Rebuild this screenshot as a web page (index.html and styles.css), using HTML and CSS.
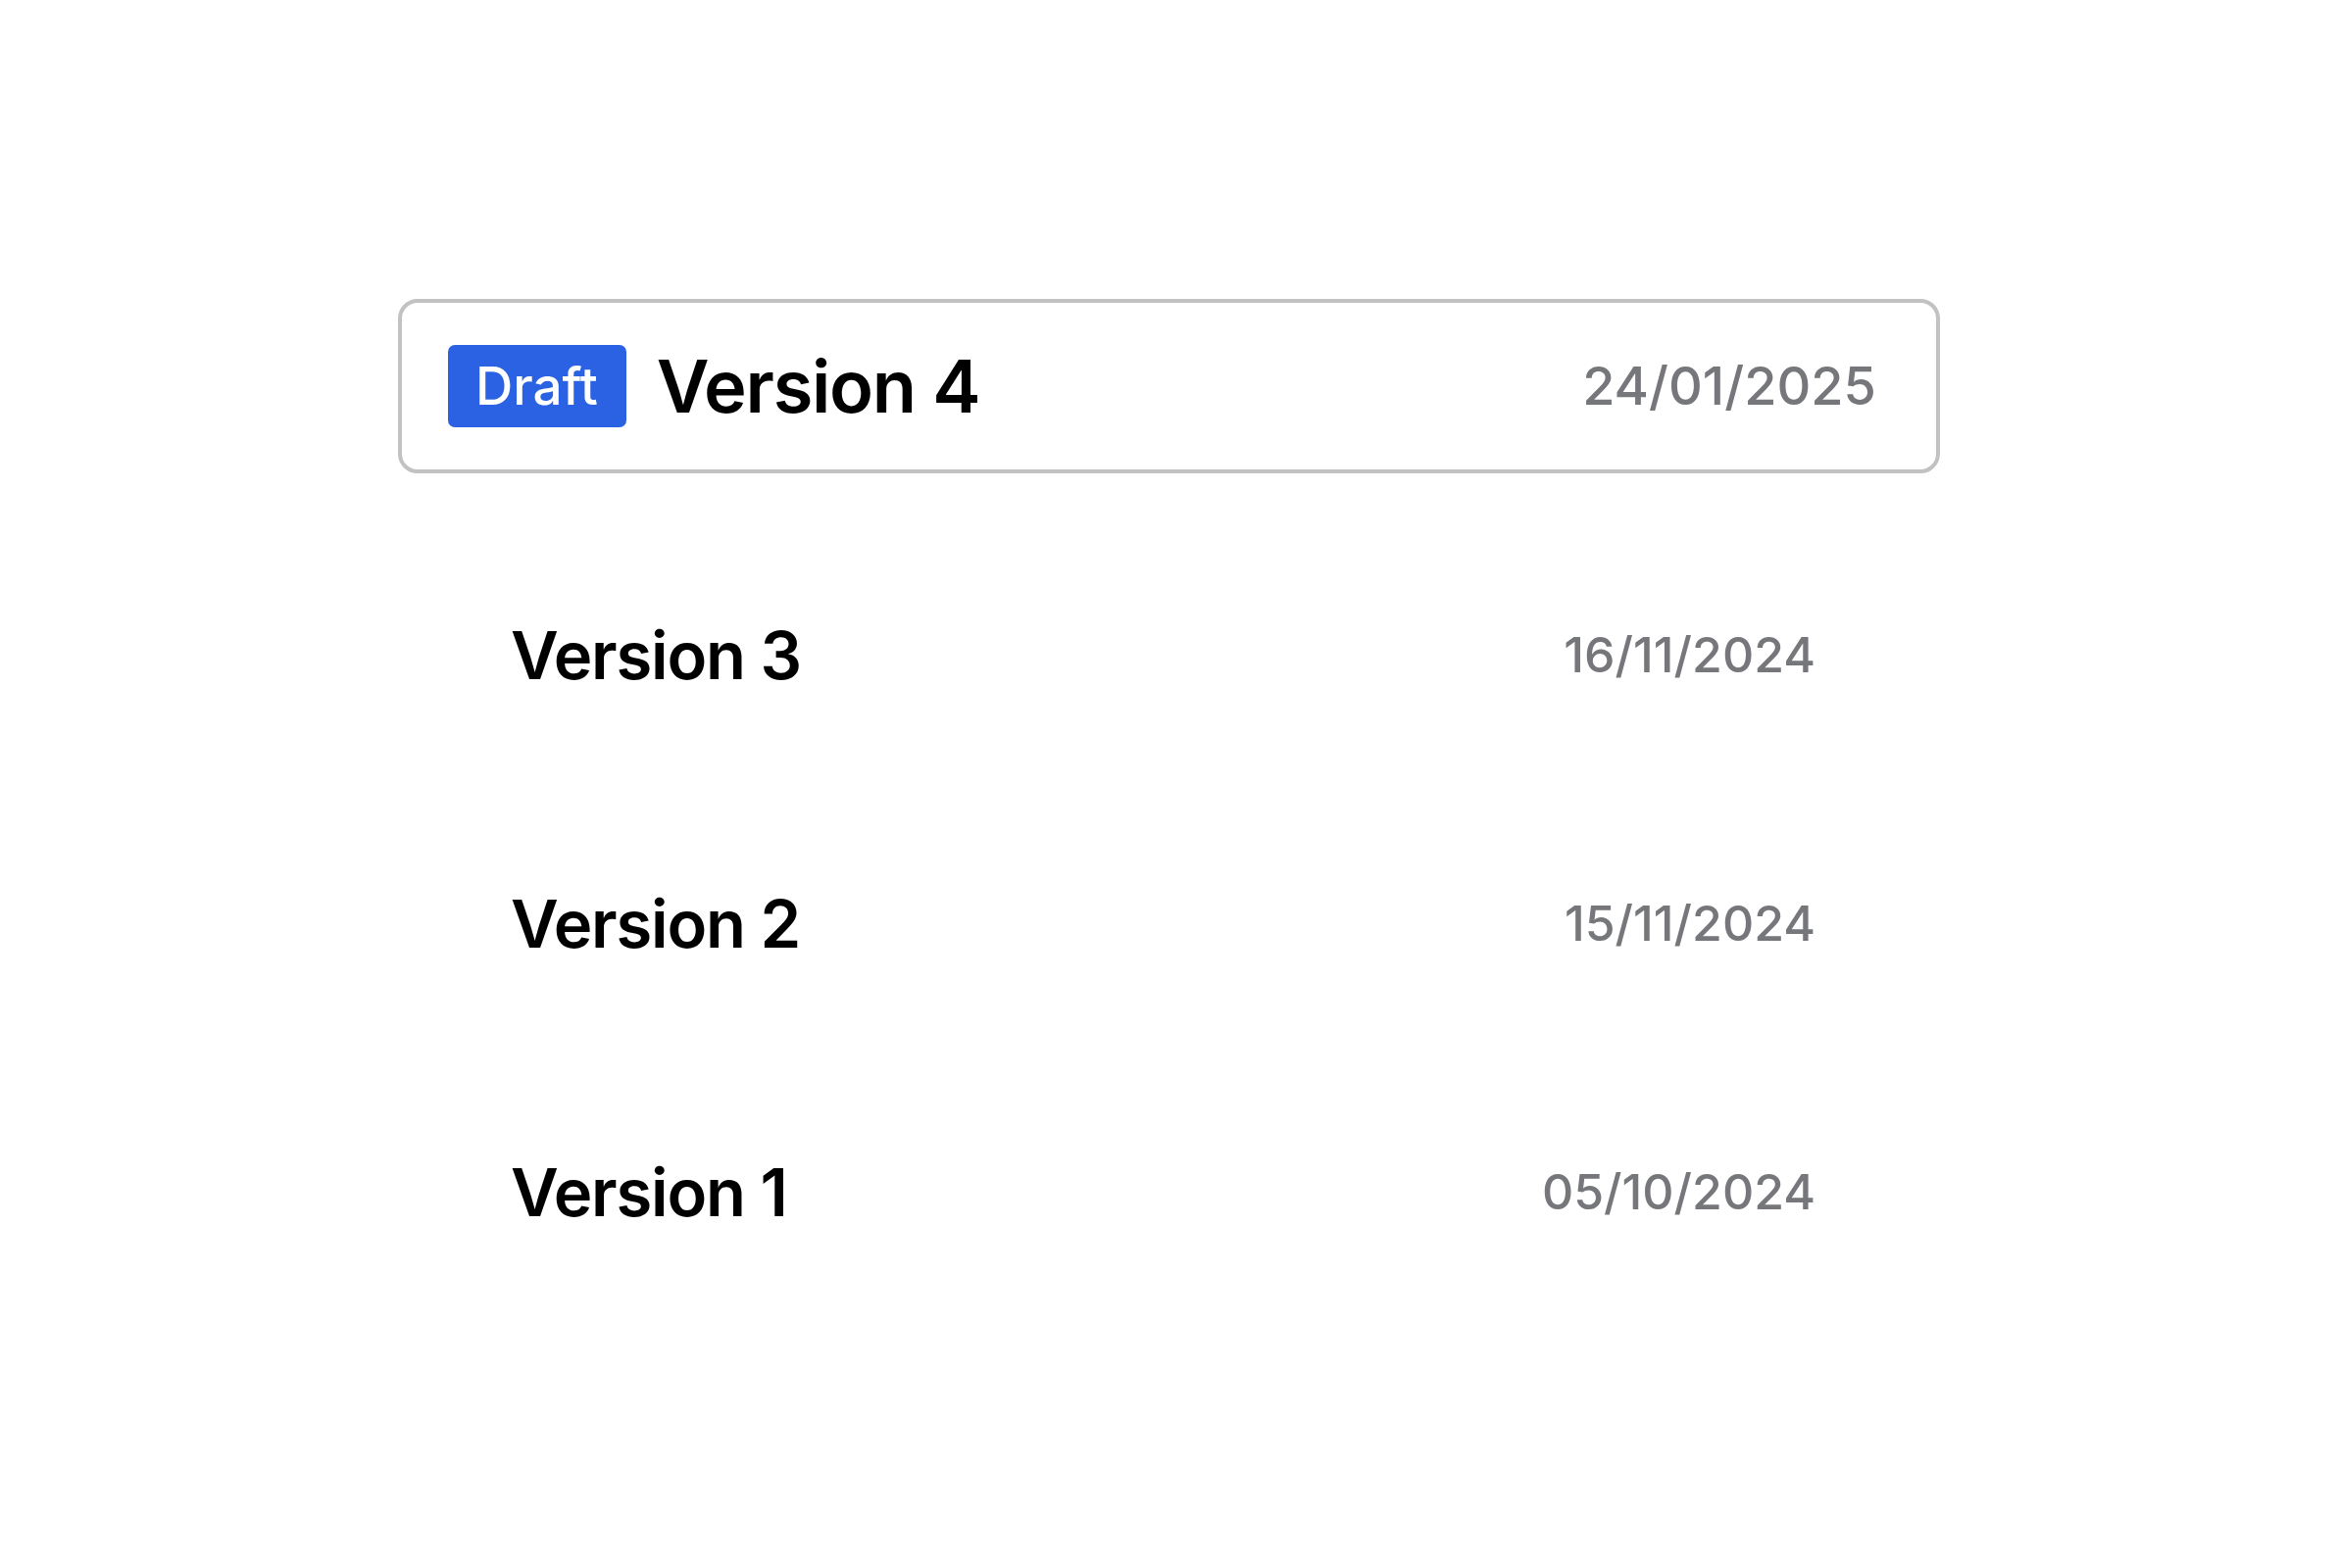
FILE: index.html
```html
<!DOCTYPE html>
<html lang="en">
<head>
<meta charset="utf-8">
<title>Versions</title>
<link rel="stylesheet" href="styles.css">
</head>
<body>
<main class="page">
  <ul class="versions">
    <li class="version version--current">
      <span class="badge">Draft</span>
      <span class="version__name">Version 4</span>
      <span class="version__date">24/01/2025</span>
    </li>
    <li class="version">
      <span class="version__name">Version 3</span>
      <span class="version__date">16/11/2024</span>
    </li>
    <li class="version">
      <span class="version__name">Version 2</span>
      <span class="version__date">15/11/2024</span>
    </li>
    <li class="version">
      <span class="version__name">Version 1</span>
      <span class="version__date">05/10/2024</span>
    </li>
  </ul>
</main>
</body>
</html>
```
FILE: styles.css
```css
html, body {
  margin: 0;
  padding: 0;
  background: #ffffff;
}
body {
  font-family: Inter, "Noto Sans", sans-serif;
  color: #000000;
}
.page {
  padding: 305px 0 0 406px;
}
.versions {
  list-style: none;
  margin: 0;
  padding: 0;
  width: 1573px;
  display: flex;
  flex-direction: column;
  gap: 96px;
}
.version {
  box-sizing: border-box;
  height: 178px;
  display: flex;
  align-items: center;
  padding: 0 127px 0 115px;
}
.version__name {
  font-size: 67px;
  font-weight: 600;
  letter-spacing: -1.2px;
  line-height: 1;
}
.version__date {
  margin-left: auto;
  font-size: 50px;
  font-weight: 500;
  color: #76777b;
  line-height: 1;
}
.version--current {
  border: 4px solid #c2c2c2;
  border-radius: 20px;
  padding: 0 61px 0 47px;
}
.version--current .version__name {
  font-size: 74px;
  letter-spacing: -1.3px;
  margin-left: 31px;
}
.version--current .version__date {
  font-size: 54px;
}
.badge {
  background: #2b62e3;
  color: #ffffff;
  border-radius: 7px;
  height: 84px;
  padding: 0 29px 0 28px;
  display: flex;
  align-items: center;
  font-size: 53px;
  font-weight: 500;
  line-height: 1;
}
```
